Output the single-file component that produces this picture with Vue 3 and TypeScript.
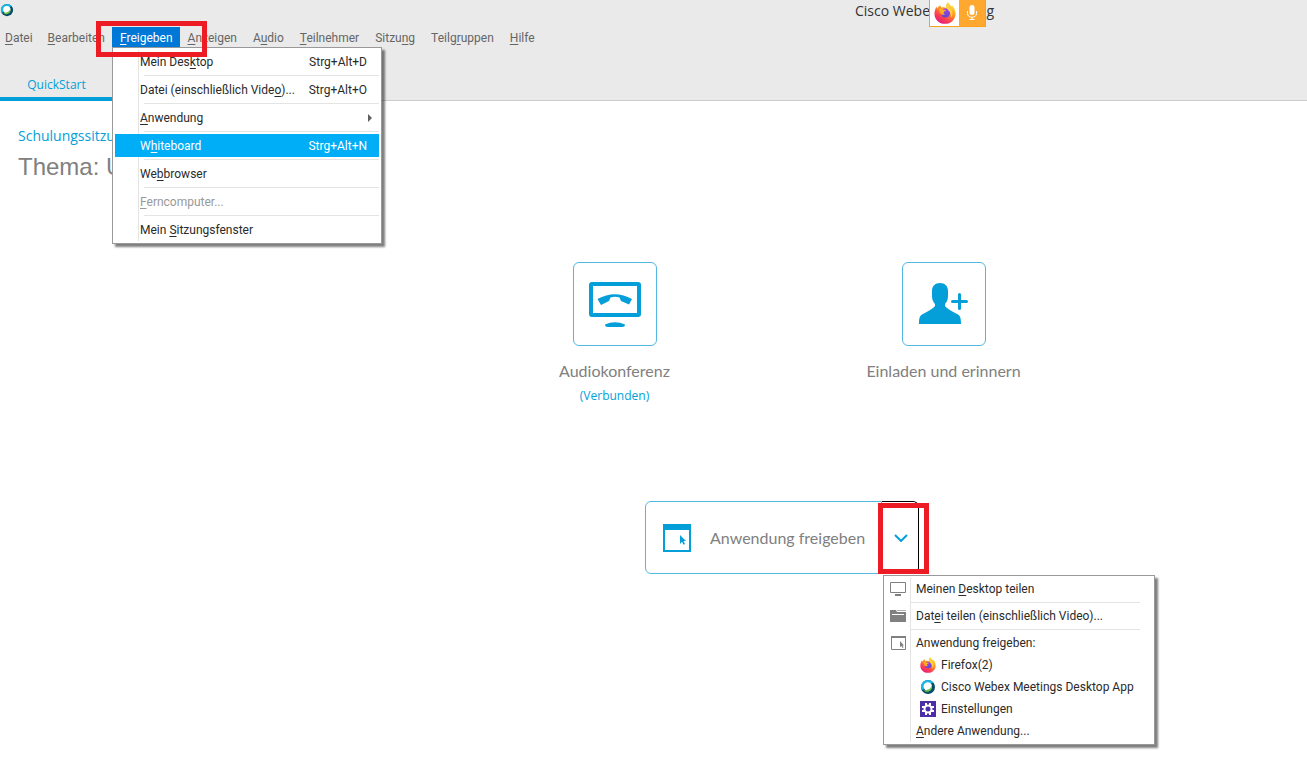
<script setup lang="ts">
interface Label {
  pre: string
  key: string
  post: string
}
interface ShareItem {
  label: Label
  shortcut?: string
  submenu?: boolean
  disabled?: boolean
  active?: boolean
}
interface AppItem {
  label: Label
  icon?: string
  nested?: boolean
  divided?: boolean
}

// An ampersand marks the access key, as in desktop menu resources.
const parse = (text: string): Label => {
  const at = text.indexOf('&')
  return at < 0
    ? { pre: text, key: '', post: '' }
    : { pre: text.slice(0, at), key: text[at + 1], post: text.slice(at + 2) }
}

const menusBefore: Label[] = ['&Datei', '&Bearbeiten'].map(parse)
const menusAfter: Label[] = ['&Anzeigen', 'A&udio', '&Teilnehmer', 'Sitzu&ng', 'Teilg&ruppen', '&Hilfe'].map(parse)

const shareItems: ShareItem[] = [
  { label: parse('Mein Des&ktop'), shortcut: 'Strg+Alt+D' },
  { label: parse('Datei (einschließlich Vide&o)...'), shortcut: 'Strg+Alt+O' },
  { label: parse('&Anwendung'), submenu: true },
  { label: parse('W&hiteboard'), shortcut: 'Strg+Alt+N', active: true },
  { label: parse('We&bbrowser') },
  { label: parse('&Ferncomputer...'), disabled: true },
  { label: parse('Mein &Sitzungsfenster') },
]

const appItems: AppItem[] = [
  { label: parse('Meinen &Desktop teilen'), icon: 'desktop' },
  { label: parse('Dat&ei teilen (einschließlich Video)...'), icon: 'folder', divided: true },
  { label: parse('Anwendung freigeben:'), icon: 'window', divided: true },
  { label: parse('Firefox(2)'), icon: 'firefox', nested: true },
  { label: parse('Cisco Webex Meetings Desktop App'), icon: 'webex', nested: true },
  { label: parse('Einstellungen'), icon: 'settings', nested: true },
  { label: parse('&Andere Anwendung...') },
]
</script>

<template>
  <svg class="defs" width="0" height="0" aria-hidden="true">
    <defs>
      <linearGradient id="fire" x1="0.85" y1="0.05" x2="0.3" y2="1">
        <stop offset="0" stop-color="#fff04a" />
        <stop offset="0.4" stop-color="#ff9a1f" />
        <stop offset="0.72" stop-color="#ff4050" />
        <stop offset="1" stop-color="#e01a80" />
      </linearGradient>
      <linearGradient id="globe" x1="0.6" y1="0" x2="0.4" y2="1">
        <stop offset="0" stop-color="#a040f0" />
        <stop offset="1" stop-color="#5848d0" />
      </linearGradient>
      <symbol id="firefox" viewBox="0 0 24 24">
        <path fill="url(#fire)" d="M15 0c2 2 3 3.500 3.500 5 .8-.2 1-.8 1-1.500C22 6 23.500 9 23.500 13c0 6-5 10.800-11.500 10.800S.5 19 .5 13c0-3 1-6 2.500-8 0 1 .2 1.700.7 2.300C4.500 5 6 4 7 3.500c0 1 .3 1.800 1 2.500 2-.7 4-.4 5.500.3C13 4 13.500 2 15 0z" />
        <circle cx="12.500" cy="12" r="5" fill="url(#globe)" />
        <path fill="#ffab24" d="M4.500 8c2.300-1.500 4.500-1 6 .5 1.500 0 2.500.2 3 .6-.6 1-2.300 1.200-3 2-.2 1.200.6 2 2 2-1.500 1.500-4.500 1-5.500-.6C6 11 6 9.500 4.500 8z" />
        <path fill="#ffd43b" d="M14.500 2c1 4 5 5 5.500 10 .2 2-.4 4-1.500 5.500.4-5-1-7-3-8.500C14 7.500 13.300 5 14.500 2z" />
      </symbol>
      <symbol id="webex" viewBox="0 0 16 16">
        <circle cx="8" cy="8" r="7" fill="#064f68" />
        <path fill="#18b8e8" d="M8 1a7 7 0 0 0-6.200 10.200L5 9.500 10.500 4.500l3-.8A7 7 0 0 0 8 1z" />
        <circle cx="7.800" cy="7.500" r="4.200" fill="#fff" />
        <path fill="#6cc04a" d="M11.800 6.500c1 3.500-2 7-6.300 6.200l-2-1.700c4 .8 7-1 8.300-4.500z" />
      </symbol>
      <symbol id="settings" viewBox="0 0 16 16">
        <path fill="#4b2ea8" d="M0 0h16v16H0z" />
        <circle cx="8" cy="8" r="3.500" fill="none" stroke="#fff" stroke-width="2" />
        <path stroke="#fff" stroke-width="2" d="M6 2v3M10 2v3M6 11v3M10 11v3M2 6h3M2 10h3M11 6h3M11 10h3" />
      </symbol>
      <symbol id="desktop" viewBox="0 0 16 16">
        <path fill="none" stroke="#808080" d="M.5 1.500h15v10H.5z" />
        <path fill="#808080" d="M5 13h6v2H5z" />
      </symbol>
      <symbol id="folder" viewBox="0 0 16 16">
        <path fill="#808080" d="M0 2h6l1 2h9v10H0z" />
        <path fill="#a8b0b8" d="M7 2h9v1H7z" />
        <path fill="#fff" d="M2 6h12v1H2z" />
      </symbol>
      <symbol id="window" viewBox="0 0 16 16">
        <path fill="none" stroke="#808080" d="M1.500 1.500h14v13h-14z" />
        <path fill="#808080" d="M1 1h15v2H1zM10 6l4 4.500h-1.500l1 2-1 .5-1-2L10 12z" />
      </symbol>
    </defs>
  </svg>

  <div class="app">
    <header class="header">
      <div class="titlebar">
        <svg class="logo"><use href="#webex" /></svg>
        <div class="title">
          <span>Cisco Webex Meeting</span>
          <div class="sharing">
            <svg class="fox"><use href="#firefox" /></svg>
            <button class="mic" type="button" aria-label="Mikrofon">
              <svg viewBox="0 0 12 18" width="12" height="18">
                <rect x="3.500" y="1" width="5" height="10" rx="2.500" fill="#fff" />
                <path fill="none" stroke="#fff" d="M1.500 7v2.500c0 5 9 5 9 0V7M6 13v2.500M3.500 15.500h5" />
              </svg>
            </button>
          </div>
        </div>
      </div>

      <nav class="menubar">
        <button v-for="m in menusBefore" :key="m.post" type="button" class="menu-title">{{ m.pre }}<u>{{ m.key }}</u>{{ m.post }}</button>
        <div class="open-menu">
          <button type="button" class="menu-title selected"><u>F</u>reigeben</button>
          <ul class="popup share-menu">
            <li v-for="item in shareItems" :key="item.label.post">
              <button type="button" class="share-row" :class="{ active: item.active }" :disabled="item.disabled">
                <span>{{ item.label.pre }}<u>{{ item.label.key }}</u>{{ item.label.post }}</span>
                <span v-if="item.shortcut">{{ item.shortcut }}</span>
                <svg v-if="item.submenu" class="caret" viewBox="0 0 8 8"><path fill="#606060" d="M1 0v8l4-4z" /></svg>
              </button>
            </li>
          </ul>
          <div class="marker marker-menu"></div>
        </div>
        <button v-for="m in menusAfter" :key="m.post" type="button" class="menu-title">{{ m.pre }}<u>{{ m.key }}</u>{{ m.post }}</button>
      </nav>

      <div class="tabs">
        <button type="button" class="tab">QuickStart</button>
      </div>
    </header>

    <main>
      <section class="topic">
        <a href="#info">Schulungssitzung</a>
        <h1>Thema: U</h1>
      </section>

      <section class="quick">
        <div class="tiles">
          <div class="tile">
            <button type="button" class="tile-button" aria-labelledby="audio-label">
              <svg viewBox="0 0 52 46" width="52" height="46">
                <rect x="2" y="3" width="48" height="31" rx="1" fill="none" stroke="#049fd9" stroke-width="4" />
                <path fill="#049fd9" d="M8.500 18Q26 8.500 43 18l-3 5.500-8-3.500-1.500-3.500q-4.500-1.500-9 0L20 20l-8 4zM16 43.500Q26 39 36 43.500 36 46 33 46H19Q16 46 16 43.500z" />
              </svg>
            </button>
            <span id="audio-label" class="tile-label">Audiokonferenz</span>
            <a href="#audio">(Verbunden)</a>
          </div>
          <div class="tile">
            <button type="button" class="tile-button" aria-labelledby="invite-label">
              <svg viewBox="0 0 52 46" width="52" height="46">
                <path fill="#049fd9" d="M22 2c5 0 8 3 8 8v5c0 3-1 6-3 8v2c2 3 7 5 12 8 3 1.500 4 3 4 10H1c0-7 1-8.500 4-10 5-3 10-5 12-8v-2c-2-2-3-5-3-8v-5c0-5 3-8 8-8z" />
                <path stroke="#049fd9" stroke-width="3" stroke-linecap="round" d="M41.500 13.500v14M34.500 20.500h14" />
              </svg>
            </button>
            <span id="invite-label" class="tile-label">Einladen und erinnern</span>
          </div>
        </div>

        <div class="share">
          <button type="button" class="share-main">
            <svg viewBox="0 0 28 28" width="28" height="28">
              <rect x="1" y="1" width="26" height="26" fill="none" stroke="#049fd9" stroke-width="2" />
              <path fill="#049fd9" d="M0 0h28v6H0zM17 11l6 6h-2.500l1.500 3-1.500.8-1.500-3L17 20z" />
            </svg>
            <span>Anwendung freigeben</span>
          </button>
          <div class="share-more">
            <button type="button" class="share-arrow" aria-label="Weitere Optionen">
              <svg viewBox="0 0 14 8" width="14" height="8"><path fill="none" stroke="#049fd9" stroke-width="2" d="M1 1l6 6 6-6" /></svg>
            </button>
            <ul class="popup app-menu">
              <li v-for="item in appItems" :key="item.label.pre + item.label.post" :class="{ divided: item.divided }">
                <button type="button" class="app-row" :class="{ nested: item.nested }">
                  <svg class="app-icon"><use v-if="item.icon" :href="'#' + item.icon" /></svg>
                  <span>{{ item.label.pre }}<u>{{ item.label.key }}</u>{{ item.label.post }}</span>
                </button>
              </li>
            </ul>
            <div class="marker marker-arrow"></div>
          </div>
        </div>
      </section>
    </main>
  </div>
</template>

<style>
body {
  margin: 0;
  background: #fff;
}
</style>

<style scoped>
.app {
  min-height: 100vh;
  overflow: hidden;
  font-family: Roboto, "Open Sans", sans-serif;
  font-size: 12px;
  line-height: 20px;
  color: #2a2a2a;
}
.defs {
  position: absolute;
}
button {
  margin: 0;
  padding: 0;
  border: 0;
  background: none;
  font: inherit;
  color: inherit;
  white-space: nowrap;
}
a {
  color: #049fd9;
  text-decoration: none;
}
u {
  text-underline-offset: 2px;
}
.header {
  display: flex;
  flex-direction: column;
  background: #eaeaea;
  border-bottom: 1px solid #ccc;
}
.titlebar {
  display: flex;
  height: 27px;
}
.logo {
  width: 14px;
  height: 14px;
  margin-top: 3px;
}
.title {
  position: relative;
  margin: 0 auto;
  left: 264px;
  font-family: "Open Sans", sans-serif;
  font-size: 14px;
  line-height: 22px;
  color: #333;
}
.sharing {
  position: absolute;
  top: 0;
  left: 74px;
  display: flex;
  align-items: center;
  width: 55px;
  height: 26px;
  background: #fff;
  border: 1px solid #f9a11b;
  border-top: 0;
  box-sizing: content-box;
}
.fox {
  width: 22px;
  height: 22px;
  margin: 0 3px 0 4px;
}
.mic {
  display: grid;
  place-items: center;
  flex: 1;
  height: 26px;
  background: #ffa830;
}
.menubar {
  display: flex;
  height: 20px;
  color: #666;
}
.menu-title {
  height: 20px;
  padding: 1px 7px 0 8px;
}
.menubar > .menu-title:first-child {
  padding-left: 5px;
}
.open-menu ~ .menu-title {
  padding-right: 8px;
}
.open-menu {
  position: relative;
}
.selected {
  display: block;
  background: #0078d7;
  color: #fff;
}
.popup {
  position: absolute;
  z-index: 2;
  margin: 0;
  padding: 2px;
  list-style: none;
  background: #fff;
  border: 1px solid #999;
  box-shadow: 3px 3px 2px rgba(0, 0, 0, 0.5);
  color: #2a2a2a;
}
.popup::before {
  content: "";
  position: absolute;
  top: 2px;
  bottom: 2px;
  left: 25px;
  width: 1px;
  background: #e4e4e4;
}
.share-menu {
  top: 20px;
  left: 0;
  width: 264px;
}
.share-menu li + li {
  padding-top: 2px;
}
.share-menu li + li::before {
  content: "";
  display: block;
  height: 1px;
  margin: 0 0 2px 29px;
  background: #e4e4e4;
}
.share-row {
  position: relative;
  display: flex;
  align-items: center;
  justify-content: space-between;
  width: 100%;
  height: 23px;
  padding: 0 12px 0 25px;
}
.share-row.active {
  background: #00adf7;
  color: #fff;
}
.share-row:disabled {
  color: #999;
}
.caret {
  width: 8px;
  height: 8px;
  margin-right: -8px;
}
.marker {
  position: absolute;
  z-index: 3;
  box-sizing: border-box;
  border: 5px solid #ed1c24;
  pointer-events: none;
}
.marker-menu {
  top: -6px;
  left: -16px;
  width: 111px;
  height: 36px;
}
.tabs {
  display: flex;
  height: 53px;
  align-items: flex-end;
}
.tab {
  width: 113px;
  height: 28px;
  margin-bottom: -1px;
  border-bottom: 4px solid #049fd9;
  font-family: "Open Sans", sans-serif;
  color: #049fd9;
}
.topic {
  padding: 24px 18px 0;
  font-family: "Open Sans", sans-serif;
  font-size: 14px;
  line-height: 22px;
}
.topic a {
  display: block;
}
h1 {
  margin: 4px 0 0;
  font: 24px/32px "Liberation Sans", Arial, sans-serif;
  color: #808080;
}
.quick {
  display: flex;
  flex-direction: column;
  align-items: center;
  padding: 79px 0 0 251px;
}
.tiles {
  display: grid;
  grid-template-columns: 329px 329px;
}
.tile {
  display: flex;
  flex-direction: column;
  align-items: center;
}
.tile-button {
  display: grid;
  place-items: center;
  width: 84px;
  height: 84px;
  border: 1px solid #53b7e2;
  border-radius: 6px;
}
.tile-label {
  margin: 13px 0 3px;
  font-family: Lato, sans-serif;
  font-size: 16px;
  line-height: 24px;
  color: #808080;
}
.tile a {
  font-family: "Open Sans", sans-serif;
  line-height: 20px;
}
.share {
  display: flex;
  height: 73px;
  margin-top: 95px;
  padding-left: 6px;
}
.share-main {
  display: flex;
  align-items: center;
  gap: 19px;
  box-sizing: border-box;
  width: 237px;
  padding-left: 17px;
  border: 1px solid #53b7e2;
  border-radius: 6px 0 0 6px;
  font-family: Lato, sans-serif;
  font-size: 16px;
  color: #808080;
}
.share-more {
  position: relative;
}
.share-arrow {
  display: grid;
  place-items: center;
  box-sizing: border-box;
  width: 37px;
  height: 100%;
  padding-left: 2px;
  border: 1px solid #000;
  border-left: 0;
  border-radius: 0 6px 6px 0;
}
.marker-arrow {
  top: 2px;
  left: -4px;
  width: 51px;
  height: 71px;
}
.app-menu {
  top: 74px;
  left: 1px;
  width: 266px;
}
.app-menu::before {
  left: 26px;
}
.app-menu .divided {
  padding-top: 2px;
}
.app-menu .divided::before {
  content: "";
  display: block;
  height: 1px;
  margin: 0 12px 2px 25px;
  background: #e4e4e4;
}
.app-row {
  display: flex;
  align-items: center;
  gap: 10px;
  width: 100%;
  height: 22px;
  padding-left: 4px;
}
.app-row.nested {
  gap: 5px;
  padding-left: 34px;
}
.app-icon {
  width: 16px;
  height: 16px;
}
</style>
